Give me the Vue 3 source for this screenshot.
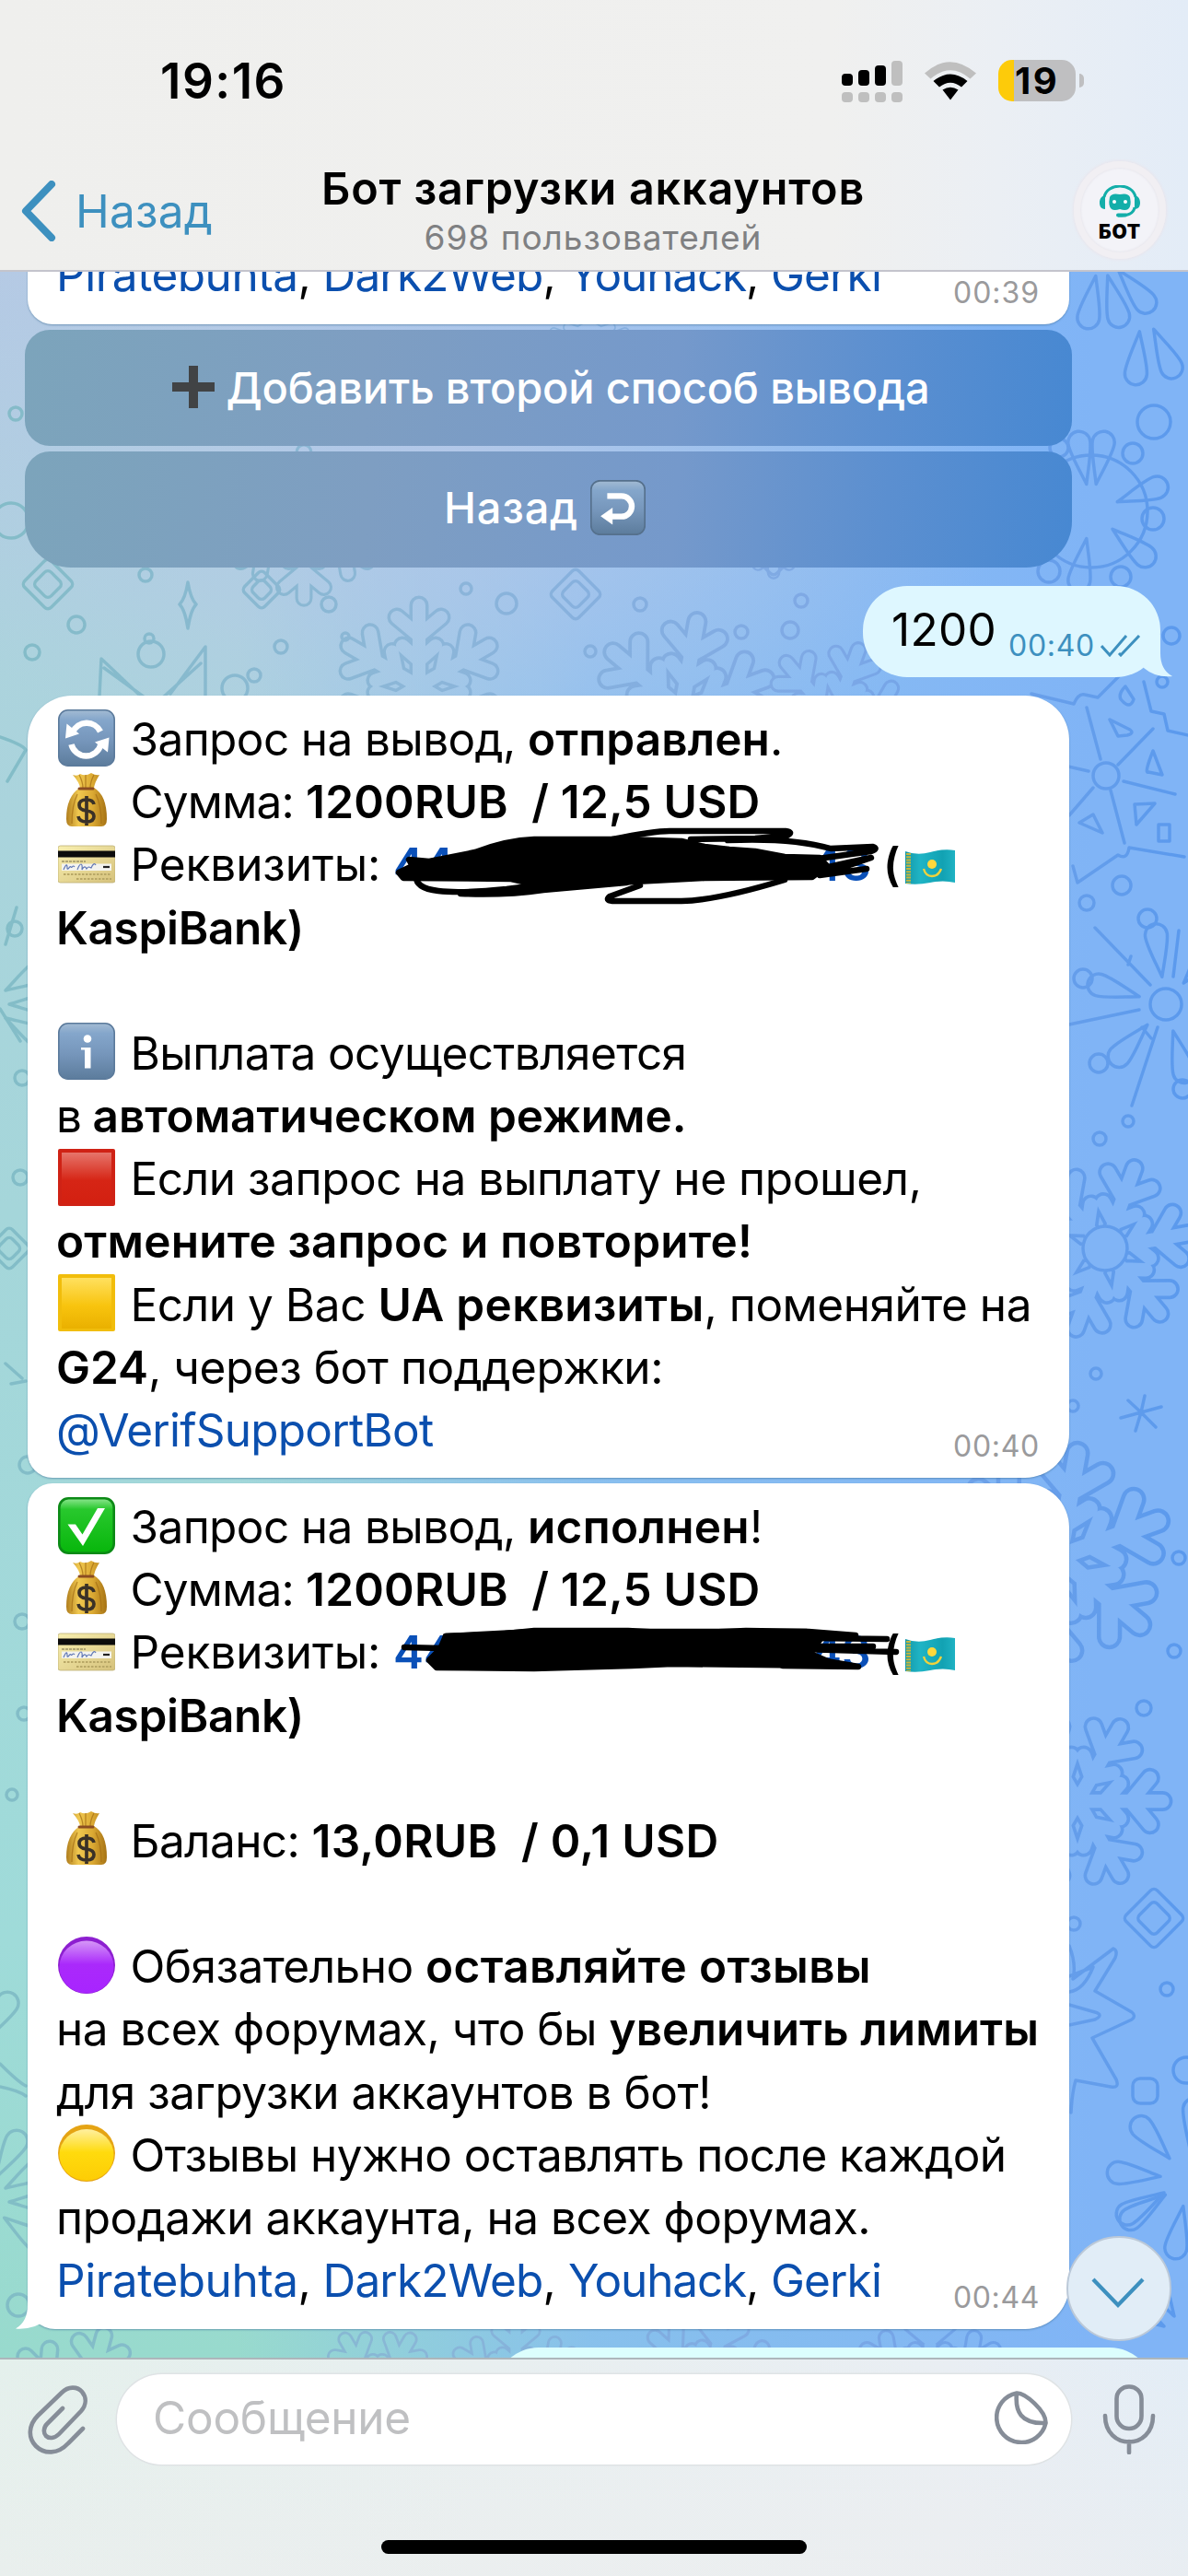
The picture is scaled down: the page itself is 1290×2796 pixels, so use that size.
<script setup>
// Spreads a text run over a given advance width by adjusting its tracking
const vFit = {
  mounted(el, { value }) {
    if (!value) return
    const count = [...el.textContent].length
    const width = el.getBoundingClientRect().width
    el.style.letterSpacing = (value - width) / count + 'px'
  }
}

const t = (text, w) => ({ text, w })
const b = (text, w) => ({ text, w, kind: 'bold' })
const a = (text, w) => ({ text, w, kind: 'link' })
const icon = (name) => ({ icon: name })

const links = [
  a('Piratebuhta', 262.5), t(', ', 27), a('Dark2Web', 239), t(', ', 27.5),
  a('Youhack', 193), t(', ', 27), a('Gerki', 120)
]

const sent = [
  [icon('sync'), t('Запрос на вывод, ', 431.5), b('отправлен', 263), t('.')],
  [icon('bag'), t('Сумма: ', 190.5), b('1200RUB  / 12,5 USD', 493.5)],
  [icon('card'), t('Реквизиты: ', 285.5), { card: true }, b('('), icon('flag')],
  [b('KaspiBank)', 269)],
  [],
  [icon('info'), t('Выплата осуществляется', 604)],
  [t('в ', 39.5), b('автоматическом режиме.', 645)],
  [icon('red'), t('Если запрос на выплату не прошел,', 859)],
  [b('отмените запрос и повторите!', 756)],
  [icon('yellow'), t('Если у Вас ', 269), b('UA реквизиты', 354), t(', поменяйте на', 355.5)],
  [b('G24', 100), t(', через бот поддержки:', 559)],
  [a('@VerifSupportBot', 411)]
]

const done = [
  [icon('check'), t('Запрос на вывод, ', 431.5), b('исполнен', 241), t('!')],
  [icon('bag'), t('Сумма: ', 190.5), b('1200RUB  / 12,5 USD', 493.5)],
  [icon('card'), t('Реквизиты: ', 285.5), { card: true }, b('('), icon('flag')],
  [b('KaspiBank)', 269)],
  [],
  [icon('bag'), t('Баланс: ', 197), b('13,0RUB  / 0,1 USD', 442)],
  [],
  [icon('purple'), t('Обязательно ', 320.5), b('оставляйте отзывы', 484)],
  [t('на всех форумах, что бы ', 600.5), b('увеличить лимиты', 466.5)],
  [t('для загрузки аккаунтов в бот!', 711)],
  [icon('amber'), t('Отзывы нужно оставлять после каждой', 951)],
  [t('продажи аккаунта, на всех форумах.', 884)],
  links
]

const rings = [
  [17, 449, 7], [12, 565, 19], [83, 678, 9], [158, 624, 7], [35, 708, 8], [162, 693, 5], [164, 710, 14],
  [305, 702, 7], [276, 733, 7], [255, 747, 14], [357, 656, 8], [375, 691, 4], [506, 639, 6], [550, 655, 11],
  [695, 656, 7], [641, 707, 6], [805, 686, 7], [858, 684, 9], [870, 652, 7], [1253, 458, 18], [1230, 492, 11],
  [1252, 563, 12], [1217, 626, 11], [1139, 620, 12], [1272, 690, 9], [1262, 740, 6], [1150, 486, 10],
  [1218, 961, 10], [1180, 980, 8], [1246, 997, 10], [1176, 1062, 10], [1193, 1154, 10], [1284, 1182, 10],
  [1225, 1217, 6], [1194, 1236, 7], [1190, 1491, 6], [1165, 1526, 6], [1280, 1691, 7], [1275, 1792, 7],
  [1242, 1854, 8], [1166, 2088, 7], [1267, 2159, 7], [1288, 2247, 14], [24, 1760, 8], [26, 1860, 7],
  [13, 1948, 6], [16, 1008, 8], [30, 1590, 9], [22, 1278, 8], [20, 2502, 12], [24, 1170, 8]
]
const drops = [
  [1185, 555, 10], [1185, 555, 70], [1185, 555, 130], [1185, 555, 190], [1185, 555, 250], [1185, 555, 310], [1185, 555, 350],
  [1266, 1090, -8], [1266, 1090, 75], [1266, 1090, 165], [1266, 1090, 222], [1266, 1090, 286], [1266, 1090, 40], [1266, 1090, 120],
  [1290, 2365, -120], [1290, 2365, -85], [1290, 2365, -42], [1290, 2365, 5], [1290, 2365, 190], [1290, 2365, 235],
  [1195, 270, 140], [1195, 270, 165], [1195, 270, 190], [1240, 330, 155], [1240, 330, 185],
  [-20, 2390, 60], [-20, 2390, 90], [-20, 2390, 30], [-20, 2390, 125], [-20, 1090, 60], [-20, 1090, 90], [-20, 1090, 120],
  [1290, 2540, -60], [1290, 2540, -30], [-30, 2240, 30]
]
const flakes = [
  [1200, 1355, 1.05, 20], [1150, 1690, 1.3, 10], [1170, 1955, 1.05, 30], [455, 745, 1, 0],
  [740, 770, 1.1, 10], [330, 570, 0.9, 0], [905, 780, 0.9, 20], [560, 2590, 0.8, 0], [770, 2590, 0.9, 12],
  [410, 2600, 0.8, 30], [1010, 2590, 0.9, 0], [90, 2620, 1, 15], [640, 352, 0.5, 0], [840, 560, 0.7, 0]
]
const diamonds = [[52, 634, 29], [625, 645, 29], [1253, 2082, 34], [10, 1355, 24], [284, 640, 22], [840, 600, 26]]
</script>

<template>
  <div class="phone">
    <svg class="sprite" width="0" height="0">
      <defs>
        <linearGradient id="steel" x1="0" y1="0" x2="0" y2="1">
          <stop offset="0" stop-color="#a3bbd3" /><stop offset=".18" stop-color="#84a6cb" />
          <stop offset=".55" stop-color="#7696bb" /><stop offset="1" stop-color="#5c7c9c" />
        </linearGradient>
        <linearGradient id="redFill" x1="0" y1="0" x2="0" y2="1">
          <stop offset="0" stop-color="#e6756b" /><stop offset=".55" stop-color="#d62515" /><stop offset="1" stop-color="#d32011" />
        </linearGradient>
        <linearGradient id="yellowFill" x1="0" y1="0" x2="0" y2="1">
          <stop offset="0" stop-color="#ffe05f" /><stop offset=".55" stop-color="#f8c40e" /><stop offset="1" stop-color="#eab000" />
        </linearGradient>
        <linearGradient id="greenFill" x1="0" y1="0" x2="0" y2="1">
          <stop offset="0" stop-color="#8ee691" /><stop offset=".2" stop-color="#28c82d" /><stop offset="1" stop-color="#07b60b" />
        </linearGradient>
        <linearGradient id="purpleFill" x1="0" y1="0" x2="0" y2="1">
          <stop offset="0" stop-color="#d597f7" /><stop offset=".45" stop-color="#aa29fb" /><stop offset="1" stop-color="#a824ff" />
        </linearGradient>
        <linearGradient id="amberFill" x1="0" y1="0" x2="0" y2="1">
          <stop offset="0" stop-color="#fff0a0" /><stop offset=".45" stop-color="#ffdb0d" /><stop offset="1" stop-color="#fdcc05" />
        </linearGradient>
        <linearGradient id="cardFill" x1="0" y1="0" x2="1" y2="1">
          <stop offset="0" stop-color="#f8efaf" /><stop offset="1" stop-color="#d6c27c" />
        </linearGradient>
        <linearGradient id="bagFill" x1="0" y1="0" x2="1" y2="0">
          <stop offset="0" stop-color="#b07d1c" /><stop offset=".3" stop-color="#f0c850" />
          <stop offset=".65" stop-color="#dba933" /><stop offset="1" stop-color="#a67214" />
        </linearGradient>
        <linearGradient id="flagFill" x1="0" y1="0" x2="1" y2="0">
          <stop offset="0" stop-color="#1598a8" /><stop offset=".3" stop-color="#1fb4c5" />
          <stop offset=".75" stop-color="#12a2b3" /><stop offset="1" stop-color="#1fb2c3" />
        </linearGradient>

        <symbol id="e-sync" viewBox="0 0 62 62">
          <rect x=".8" y=".8" width="60.4" height="60.4" rx="10" fill="url(#steel)" stroke="#5b7a9b" stroke-width="1.6" />
          <path d="M16 25A16.5 16.5 0 0 1 46 24" fill="none" stroke="#fff" stroke-width="6.5" />
          <path d="M46.5 38A16.5 16.5 0 0 1 14.5 38" fill="none" stroke="#fff" stroke-width="6.5" />
          <path d="M9.500 15.500L8 31.500 23 26.500zM55.500 30.500L54 46.500 40 35.500z" fill="#fff" />
        </symbol>
        <symbol id="e-info" viewBox="0 0 62 62">
          <rect x=".8" y=".8" width="60.4" height="60.4" rx="10" fill="url(#steel)" stroke="#5b7a9b" stroke-width="1.6" />
          <circle cx="32" cy="17.500" r="4.300" fill="#fff" />
          <path d="M25 27h10.500v22.500H29V29.500h-4z" fill="#fff" />
        </symbol>
        <symbol id="e-return" viewBox="0 0 62 62">
          <rect x=".8" y=".8" width="60.4" height="60.4" rx="10" fill="url(#steel)" stroke="#55708c" stroke-width="1.8" />
          <path d="M19 18h16a11.500 11.500 0 0 1 0 23H24" fill="none" stroke="#fff" stroke-width="6.600" />
          <path d="M25 31v19L11.500 40.500z" fill="#fff" />
        </symbol>
        <symbol id="e-check" viewBox="0 0 62 62">
          <rect x="1.300" y="1.300" width="59.400" height="59.400" rx="10" fill="url(#greenFill)" stroke="#0c8a16" stroke-width="2.600" />
          <path d="M10.500 29.500h8.500l7.500 11L43 12h8L27 53z" fill="#fff" />
        </symbol>
        <symbol id="e-red" viewBox="0 0 62 62">
          <rect width="62" height="62" rx="2" fill="#cf2215" /><rect x="4" y="4" width="54" height="55" fill="url(#redFill)" />
        </symbol>
        <symbol id="e-yellow" viewBox="0 0 62 62">
          <rect width="62" height="62" rx="2" fill="#f1bd0b" /><rect x="4" y="4" width="54" height="55" fill="url(#yellowFill)" />
        </symbol>
        <symbol id="e-purple" viewBox="0 0 62 62">
          <circle cx="31" cy="31" r="31" fill="#8d1fd0" /><ellipse cx="31" cy="33" rx="29.500" ry="28.500" fill="url(#purpleFill)" />
        </symbol>
        <symbol id="e-amber" viewBox="0 0 62 62">
          <circle cx="31" cy="31" r="31" fill="#e5a414" /><ellipse cx="31" cy="33" rx="29.500" ry="28" fill="url(#amberFill)" />
        </symbol>
        <symbol id="e-card" viewBox="0 0 62 62">
          <rect y="12" width="62" height="40" rx="2.500" fill="url(#cardFill)" stroke="#bdae73" stroke-width=".8" />
          <rect y="17.500" width="62" height="7" fill="#0c0c0c" />
          <path d="M4 29h26" stroke="#776f4d" stroke-width="1" stroke-dasharray="3 1" />
          <rect x="4" y="31.500" width="54" height="7.500" fill="#f3f3ef" />
          <path d="M6 38c3-7 4-6 4-2s3-3 4-1 2-3 4 0M21 38c3-8 6-8 5 0 2-4 4-4 5-1 2-3 3-2 5-1 2-5 4-5 5-3" fill="none" stroke="#6077b5" stroke-width="1.200" />
          <path d="M49 35h7" stroke="#222" stroke-width="2.200" />
          <path d="M6 43h52M20 48h38" stroke="#b9a867" stroke-width="2" stroke-dasharray="2.500 1.500" />
        </symbol>
        <symbol id="e-bag" viewBox="0 0 62 62">
          <path d="M16 3q5 2 8-1 6 3 12-1 5 3 9 2-5 8-6 14 14 8 14 34 0 8-6 8H15q-6 0-6-8 0-25 15-34-1-6-8-14z" fill="url(#bagFill)" />
          <path d="M23 3q4 8 4 14M30 3v14M39 3q-4 8-4 14M21 24q-6 12-6 32M41 24q6 12 6 32" stroke="#a36c14" stroke-width="1.300" fill="none" opacity=".7" />
          <path d="M23 18h15" stroke="#8b4c22" stroke-width="3" stroke-linecap="round" />
          <path d="M39 35q-1-5-8-5-8 0-8 6 0 5 8 6 8 1 8 6 0 6-8 6t-9-6M31 26v32" fill="none" stroke="#3a3127" stroke-width="3.700" />
        </symbol>
        <symbol id="e-flag" viewBox="0 0 54 40">
          <path d="M0 3q13 5 27 1T54 2v35q-13-3-27 0T0 38z" fill="url(#flagFill)" />
          <path d="M3.500 5v33" stroke="#c9b53a" stroke-width="5" stroke-dasharray="2 1.200" />
          <circle cx="29" cy="17" r="5" fill="#ffd83c" />
          <path d="M20 22q2 8 9 8t10-8" fill="none" stroke="#f0d23c" stroke-width="2.300" />
        </symbol>

        <path id="arms" d="M0 0V-88M0-55l-24-20M0-55l24-20M0-28l-18-16M0-28l18-16" />
        <g id="crystal">
          <use v-for="n in 6" :key="n" href="#arms" :transform="`rotate(${n * 60})`" />
        </g>
        <path id="petal" d="M0-30C-6-50-12-66-12-76a12 12 0 0 1 24 0C12-66 6-50 0-30z" />
      </defs>
    </svg>

    <header class="top">
      <div class="status">
        <span v-fit="137" class="clock">19:16</span>
        <div class="indicators">
          <svg width="66" height="46" viewBox="0 0 66 46">
            <g fill="#000"><rect y="15" width="12" height="13" rx="4" /><rect x="18" y="11" width="12" height="17" rx="4" /><rect x="36" y="6" width="12" height="22" rx="4" /></g>
            <g fill="#bfbfbf"><rect x="54" y="1" width="12" height="27" rx="4" /><rect y="35" width="12" height="11" rx="4" /><rect x="18" y="35" width="12" height="11" rx="4" /><rect x="36" y="35" width="12" height="11" rx="4" /><rect x="54" y="35" width="12" height="11" rx="4" /></g>
          </svg>
          <svg width="60" height="44" viewBox="0 0 60 44">
            <path d="M2 13.500Q29-11 58 13.500L51.500 19.500Q30 1 8.500 19.500z" fill="#bfbfbf" />
            <path d="M11.500 22Q30 7 48.500 22L42 28.500Q30 19 18 28.500z" fill="#000" />
            <path d="M21.500 31.500Q30 26 38.500 31.500L30 42.500z" fill="#000" />
          </svg>
          <div class="battery"><span v-fit="48">19</span></div>
        </div>
      </div>
      <div class="nav">
        <div class="back">
          <svg width="40" height="66" viewBox="0 0 40 66"><path d="M35 4L7 33l28 29" fill="none" stroke="#3d90bf" stroke-width="8" stroke-linecap="round" stroke-linejoin="round" /></svg>
          <span v-fit="149">Назад</span>
        </div>
        <div class="heading">
          <div class="title"><span v-fit="590">Бот загрузки аккаунтов</span></div>
          <div class="subtitle"><span v-fit="367">698 пользователей</span></div>
        </div>
        <div class="avatar">
          <svg width="46" height="36" viewBox="0 0 46 36" fill="none" stroke="#13aea9">
            <path d="M6 13C9-3 37-3 40 13" stroke-width="3" />
            <path d="M7 11v15C2 26 1 22 1 19s1-7 6-8zM39 11v15c5 0 6-4 6-7s-1-7-6-8z" fill="#13aea9" stroke="none" />
            <path d="M39 24c-1 7-7 9-18 9" stroke-width="3" />
            <rect x="19" y="30.500" width="12" height="4" rx="2" fill="#13aea9" stroke="none" />
            <path d="M12 13q2-5 11-3 9-2 11 3 2 10-2 13-3 2-9 0-6 2-9 0-4-3-2-13z" fill="#13aea9" stroke="none" />
            <circle cx="17" cy="18" r="2" fill="#fff" stroke="none" /><circle cx="29" cy="18" r="2" fill="#fff" stroke="none" />
          </svg>
          <span v-fit="46">БОТ</span>
        </div>
      </div>
    </header>

    <main class="chat">
      <svg class="wallpaper" width="1290" height="2264" viewBox="0 295 1290 2264">
        <defs>
          <linearGradient id="ink" x1="0" y1="0" x2="1" y2="0">
            <stop offset="0" stop-color="#7db9c4" /><stop offset=".35" stop-color="#88b3d6" />
            <stop offset=".7" stop-color="#7ba5e4" /><stop offset="1" stop-color="#5495ec" />
          </linearGradient>
          <mask id="doodles" maskUnits="userSpaceOnUse" x="0" y="295" width="1290" height="2264">
            <g fill="none" stroke-linecap="round" stroke-linejoin="round">
              <template v-for="(f, i) in flakes" :key="'f' + i">
                <use href="#crystal" :transform="`translate(${f[0]} ${f[1]}) rotate(${f[3]}) scale(${f[2]})`" stroke="#fff" stroke-width="21" />
                <use href="#crystal" :transform="`translate(${f[0]} ${f[1]}) rotate(${f[3]}) scale(${f[2]})`" stroke="#000" stroke-width="14" />
              </template>
              <g stroke="#fff" stroke-width="3.500">
                <circle v-for="(r, i) in rings" :key="'r' + i" :cx="r[0]" :cy="r[1]" :r="r[2]" />
                <use v-for="(d, i) in drops" :key="'d' + i" href="#petal" :transform="`translate(${d[0]} ${d[1]}) rotate(${d[2]})`" />
                <g v-for="(d, i) in diamonds" :key="'k' + i" :transform="`translate(${d[0]} ${d[1]}) rotate(45)`">
                  <rect :x="-d[2] * 0.7" :y="-d[2] * 0.7" :width="d[2] * 1.4" :height="d[2] * 1.4" rx="5" />
                  <rect :x="-d[2] * 0.4" :y="-d[2] * 0.4" :width="d[2] * 0.8" :height="d[2] * 0.8" rx="5" />
                </g>
                <circle cx="1185" cy="555" r="61" /><circle cx="1200" cy="1355" r="24" fill="#000" /><circle cx="1266" cy="1090" r="17" />
                <circle cx="1201" cy="842" r="14" /><rect x="1230" y="2256" width="27" height="27" rx="8" />
                <path d="M204 632q3 18 9 24-6 6-9 26-3-20-9-26 6-6 9-24zM108 755l2-40 40 38M185 753l38-51v53M113 725l55 40 50-45" />
                <path d="M1120 753l46 11q5-12 12-10l14 3 40-40M1242 740l8 32 14 3 4 18 26 6M1165 940l5 18 44-30q10 6 12-8l60 10M1180 768l15 56M1252 791l-38 39M1160 832l22 5M1220 848l56 14M1206 858l15 57M1187 855l-26 30" />
                <path d="M1205 781l22 11q5 4-3 6l-10 1zM1222 745q-8 8-5 14 10 12 14 0zM1252 815q-10 25-5 23l15 3zM1232 873l22-1-20 23zM1172 893l15-9 10 20zM1258 895h12v18h-12z" />
                <path d="M1189 1007l60 62M1280 1010l-6 50M1161 1112l76-16M1257 1115l-28 85M1225 1047l3-9M1240 1115l10 12" />
                <path d="M1239 1533l-14-13M1239 1533l22-6M1239 1533l16 16M1239 1533l-6 20M1239 1533l-22 6M1239 1533l4-18" />
                <path d="M1161 2112q8 20 4 36l44-33q5 2 2 10l-22 36 40 23q5 4 0 8l-43 20 26 45q4 10-6 8l-38-7q-4 14-5 35M1161 2176l28 8q10 3 0 8l-28 6M1161 2145l26-10q-10 25-26 27" />
                <path d="M18 985l-12 40M22 1130l-22-35M6 1480l18 16M12 1502l16-3M0 2240q20 20 28 24M0 2265q20 4 28 10M0 800q24 8 28 14L8 848" />
              </g>
            </g>
          </mask>
        </defs>
        <rect x="0" y="295" width="1290" height="2264" fill="url(#ink)" mask="url(#doodles)" opacity=".85" />
      </svg>

      <section class="bubble first">
        <div class="line"><span v-for="(s, i) in links" :key="i" v-fit="s.w" :class="s.kind">{{ s.text }}</span></div>
        <time><span v-fit="94">00:39</span></time>
      </section>

      <div class="key">
        <svg width="46" height="46" viewBox="0 0 46 46"><path d="M18 0h10v18h18v10H28v18H18V28H0V18h18z" fill="#414345" /></svg>
        <span v-fit="764">Добавить второй способ вывода</span>
      </div>
      <div class="key last">
        <span v-fit="146">Назад</span>
        <svg class="return" width="60" height="60"><use href="#e-return" /></svg>
      </div>

      <section class="outgoing">
        <svg class="tail-right" width="46" height="46" viewBox="0 0 46 46"><path d="M18 0h15v20q0 18 13 25Q28 47 15 36z" fill="#def7ff" /></svg>
        <span v-fit="114" class="amount">1200</span>
        <span v-fit="94" class="sent-at">00:40</span>
        <svg class="ticks" width="44" height="24" viewBox="0 0 44 24"><path d="M1 12l9 10L28 1M20 20l2 2L42 1" fill="none" stroke="#3d90bf" stroke-width="3" /></svg>
      </section>

      <section class="bubble request">
        <div v-for="(line, n) in sent" :key="n" class="line">
          <template v-for="(s, i) in line" :key="i">
            <svg v-if="s.icon" :class="['emoji', s.icon]"><use :href="'#e-' + s.icon" /></svg>
            <span v-else-if="s.card" class="number"><b>44</b><b>43</b></span>
            <span v-else v-fit="s.w" :class="s.kind">{{ s.text }}</span>
          </template>
        </div>
        <svg class="scribble" width="600" height="100" viewBox="0 0 600 100" fill="none" stroke="#000" stroke-width="6.500" stroke-linecap="round" stroke-linejoin="round">
          <path d="M54 43L76 45 126 35Q160 22 190 21L285 21 350 23 375 29 402 32 430 34 462 40 500 41 508 50 492 62 375 63 280 68 200 72 165 64 48 63 43 57 58 50z" fill="#000" />
          <path d="M275 21Q320 12 337 12L463 12Q472 13 465 17L430 20 360 21M400 22Q470 19 512 31L558 29Q564 31 556 34L470 46M480 58Q530 46 556 41L500 60 551 53M62 60Q60 74 86 77 110 80 160 75L200 70M110 80Q160 82 200 76L290 68M305 71L272 83Q266 88 278 88L350 88Q390 87 462 65" />
        </svg>
        <time><span v-fit="94">00:40</span></time>
      </section>

      <section class="bubble completed">
        <svg class="tail-left" width="46" height="46" viewBox="0 0 46 46"><path d="M28 0H13v20Q13 38 0 45.500 20 47 33 36z" fill="#fff" /></svg>
        <div v-for="(line, n) in done" :key="n" class="line">
          <template v-for="(s, i) in line" :key="i">
            <svg v-if="s.icon" :class="['emoji', s.icon]"><use :href="'#e-' + s.icon" /></svg>
            <span v-else-if="s.card" class="number"><b>44</b><b>43</b></span>
            <span v-else v-fit="s.w" :class="s.kind">{{ s.text }}</span>
          </template>
        </div>
        <svg class="scribble second" width="600" height="100" viewBox="0 0 600 100" fill="none" stroke="#000" stroke-width="6.500" stroke-linecap="round" stroke-linejoin="round">
          <path d="M94 36L150 34 190 30 292 30 350 33 420 30 486 31 500 40 490 55 520 68 340 66 296 68 190 71 84 70 76 62 88 50z" fill="#000" />
          <path d="M49 48L90 49M94 36L190 31 292 31 488 31 539 35M488 38L573 39M480 47L558 47M480 50L583 53M490 60L542 69 460 68" />
        </svg>
        <time><span v-fit="94">00:44</span></time>
      </section>

      <section class="next"></section>

      <div class="scroll">
        <svg width="60" height="34" viewBox="0 0 60 34"><path d="M3 2l27 28L57 2" fill="none" stroke="#3d90bf" stroke-width="4.200" /></svg>
      </div>
    </main>

    <footer class="composer">
      <div class="row">
        <svg class="clip" width="66" height="76" viewBox="0 0 66 76"><path d="M60 48L44 64C33 76 18 76 9 67s-8-23 2-33L37 9c7-7 17-7 22-1s5 14-1 21L34 54c-5 5-11 5-14 2s-3-9 1-13L38 26" fill="none" stroke="#868d98" stroke-width="4.600" stroke-linecap="round" /></svg>
        <div class="field">
          <span v-fit="280">Сообщение</span>
          <svg width="58" height="58" viewBox="0 0 58 58"><path d="M24 2.500A27 27 0 1 0 55.500 35M24 2.500C33 2 56 22 55.500 35M24 2.500C22 22 28 36 55.500 35" fill="none" stroke="#868d98" stroke-width="4.600" stroke-linecap="round" stroke-linejoin="round" /></svg>
        </div>
        <svg width="58" height="76" viewBox="0 0 58 76"><path d="M29 2.500a13 13 0 0 1 13.500 13v19a13.500 13.500 0 0 1-27 0v-19A13 13 0 0 1 29 2.500zM3 34c0 38 52 38 52 0M29 62v12" fill="none" stroke="#868d98" stroke-width="4.600" stroke-linecap="round" /></svg>
      </div>
      <div class="home"></div>
    </footer>
  </div>
</template>

<style>
body { margin: 0; }
</style>

<style scoped>
.phone {
  width: 1290px;
  height: 2796px;
  display: flex;
  flex-direction: column;
  overflow: hidden;
  font-family: Inter, "Noto Sans", sans-serif;
  font-size: 49.5px;
  color: #000;
}
.sprite { position: absolute; }
span { white-space: pre; flex: none; }
svg { flex: none; display: block; }

.top {
  flex: none;
  height: 295px;
  box-sizing: border-box;
  border-bottom: 2px solid #c4c4cc;
  background: linear-gradient(90deg, #efefed 0%, #f0f0ef 70%, #ebeff4 84%, #e3ecf7 100%);
}
.status {
  height: 175px;
  display: flex;
  align-items: center;
  justify-content: space-between;
  padding: 0 122px 0 174px;
}
.clock { font-size: 53px; font-weight: 600; }
.indicators { display: flex; align-items: center; gap: 22px; }
.battery {
  position: relative;
  width: 84px;
  height: 45px;
  border-radius: 15px;
  background: linear-gradient(90deg, #fdcb0a 17px, #bfbfc1 17px);
  display: flex;
  align-items: center;
  justify-content: center;
  font-size: 40px;
  font-weight: 700;
  line-height: 45px;
}
.battery::after {
  content: "";
  position: absolute;
  left: 88px;
  top: 15px;
  width: 5px;
  height: 15px;
  border-radius: 0 5px 5px 0;
  background: #bfbfc1;
}
.nav {
  height: 118px;
  display: grid;
  grid-template-columns: 1fr auto 1fr;
}
.back {
  display: flex;
  align-items: center;
  height: 107px;
  padding-left: 21px;
  gap: 21px;
  color: #3d90bf;
}
.heading { text-align: center; margin-right: 2px; }
.title { font-size: 48.5px; font-weight: 600; line-height: 60px; }
.subtitle { font-size: 37px; line-height: 44px; padding-top: 1px; color: #7f8082; }
.avatar {
  justify-self: end;
  width: 100px;
  height: 106px;
  margin-right: 24px;
  box-sizing: border-box;
  padding-top: 26px;
  border-radius: 50%;
  background: #f3f3f8;
  box-shadow: 0 0 3px 1px #e9e5ec, inset 0 0 0 7px #f1eff3, inset 0 0 2px 8px #e9e8ee;
  display: flex;
  flex-direction: column;
  align-items: center;
  gap: 4px;
  font-size: 21px;
  font-weight: 900;
  line-height: 22px;
}

.chat {
  position: relative;
  flex: none;
  height: 2264px;
  display: flex;
  flex-direction: column;
  align-items: flex-start;
  overflow: hidden;
  background:
    radial-gradient(ellipse 620px 420px at 38% 8%, rgba(181, 200, 232, .9), rgba(181, 200, 232, 0)),
    linear-gradient(90deg, rgba(127, 180, 245, 0) 20%, rgba(130, 184, 246, .75) 50%, #80b4f6 92%),
    linear-gradient(180deg, #b5cae4 0%, #acd3dd 18%, #a5d6da 45%, #9fdbd9 80%, #98dacd 100%);
}
.chat > * { flex: none; }
.chat > section, .chat > .key { position: relative; }
.wallpaper { position: absolute; left: 0; top: 0; }
.bubble {
  width: 1131px;
  box-sizing: border-box;
  margin-left: 30px;
  padding: 13px 0 0 31px;
  background: #fff;
  box-shadow: 0 1px 2px rgba(60, 110, 150, .55);
}
.first { margin-top: -44px; height: 101px; border-radius: 0 0 27px 27px; }
.request { margin-top: 20px; height: 849px; border-radius: 48px 48px 48px 27px; }
.completed { margin-top: 6px; height: 918px; border-radius: 27px 48px 48px 30px; }
.line { height: 68.18px; line-height: 68.18px; display: flex; align-items: center; }
.bold { font-weight: 600; }
.link { color: #0b4fae; }
.emoji { width: 62px; height: 62px; margin: -3px 16.5px 0 2px; }
.emoji.flag { width: 54px; height: 40px; margin: 5px 0 0 6px; }
.number { width: 532px; display: flex; gap: 388px; color: #0a50b8; }
.number b { font-weight: 600; }
time {
  position: absolute;
  right: 32px;
  bottom: 18px;
  font-size: 32px;
  line-height: 32px;
  color: #9a9a9c;
}
.scribble { position: absolute; left: 360px; top: 135px; }
.scribble.second { top: 130px; }
.tail-left { position: absolute; left: -13px; bottom: 0; }

.key {
  width: 1137px;
  height: 126px;
  margin: 6px 0 0 27px;
  border-radius: 27px;
  background: linear-gradient(95deg, #7ca4bb 0%, #7e9ec2 33%, #7599cb 62%, #5b8fd0 82%, #4788d2 100%);
  display: flex;
  align-items: center;
  justify-content: center;
  gap: 13px;
  box-sizing: border-box;
  padding: 0 0 2px 5px;
  font-size: 47px;
  font-weight: 450;
  color: #fff;
}
.key.last { border-radius: 27px 27px 50px 50px; padding: 0 8px 5px 0; }

.outgoing {
  width: 323px;
  height: 99px;
  margin: 20px 0 0 937px;
  box-sizing: border-box;
  padding-left: 31px;
  border-radius: 48px;
  background: #def7ff;
  display: flex;
}
.tail-right { position: absolute; right: -13px; bottom: 0; }
.amount { position: relative; line-height: 94px; margin-right: 13px; }
.sent-at { position: relative; font-size: 32px; line-height: 130px; color: #3d90bf; }
.ticks { position: relative; margin: 53px 0 0 6px; }
.next { width: 716px; height: 100px; margin: 20px 0 0 537px; border-radius: 48px; background: #dcfefd; }
.scroll {
  position: absolute;
  left: 1158px;
  top: 2132px;
  width: 114px;
  height: 114px;
  box-sizing: border-box;
  border: 2px solid #bcc9d8;
  border-radius: 50%;
  background: #e1edf7;
  display: flex;
  align-items: center;
  justify-content: center;
  padding: 10px 3px 0 0;
}

.composer {
  flex: none;
  height: 237px;
  box-sizing: border-box;
  border-top: 2px solid #adb6bb;
  background:
    linear-gradient(180deg, rgba(238, 238, 238, 0), rgba(238, 238, 238, .5)),
    linear-gradient(90deg, #e4f0ec 0%, #e8eff0 40%, #e9eef3 80%, #e3edf6 100%);
}
.row { display: flex; align-items: center; padding: 16px 0 0 30px; height: 98px; }
.field {
  width: 1036px;
  height: 98px;
  margin: 0 34px 0 31px;
  box-sizing: border-box;
  padding: 0 25px 4px 39px;
  border-radius: 49px;
  background: #fff;
  box-shadow: 0 0 0 1.5px #dfe3e5;
  display: flex;
  align-items: center;
  justify-content: space-between;
  color: #bfc0c2;
}
.home { width: 462px; height: 15px; margin: 82px 0 0 414px; border-radius: 8px; background: #000; }
</style>
